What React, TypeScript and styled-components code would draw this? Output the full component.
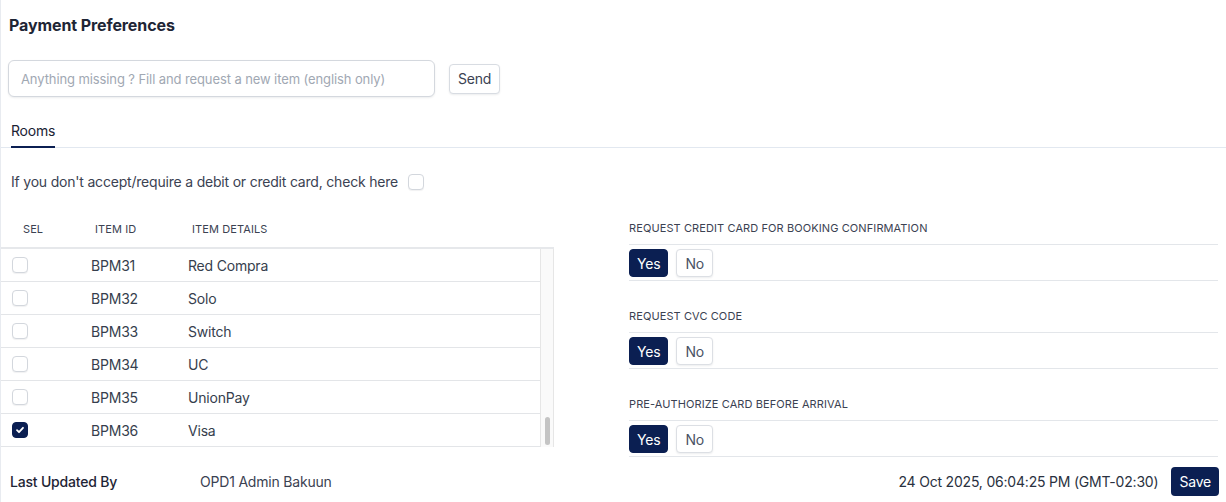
import React, { useState } from 'react';
import styled, { createGlobalStyle, css } from 'styled-components';

const NAVY = '#0b1f52';

const GlobalStyle = createGlobalStyle`
  * { box-sizing: border-box; }
  html, body { margin: 0; padding: 0; background: #fff; }
  body {
    font-family: Inter, "Noto Sans", "Liberation Sans", sans-serif;
    color: #1e293b;
    font-size: 14px;
    letter-spacing: -0.2px;
  }
`;

const Page = styled.div`
  min-height: 502px;
  border-left: 1px solid #e8ebf0;
  padding-top: 14px;
`;

const Title = styled.h1`
  margin: 0 0 24px 8px;
  font-size: 16px;
  line-height: 22px;
  font-weight: 700;
  letter-spacing: -0.1px;
  color: #1e2535;
`;

const RequestRow = styled.div`
  display: flex;
  align-items: center;
  gap: 14px;
  padding-left: 7px;
`;

const RequestInput = styled.input`
  width: 427px;
  height: 37px;
  border: 1px solid #d4d8de;
  border-radius: 6px;
  padding: 0 12px;
  font-family: inherit;
  font-size: 13px;
  letter-spacing: -0.1px;
  color: #1e293b;
  box-shadow: 0 1px 2px rgba(15, 23, 42, 0.08);
  outline: none;
  &::placeholder { color: #a1a8b3; }
`;

const GhostButton = styled.button`
  height: 30px;
  padding: 0 8px;
  border: 1px solid #d8dce2;
  border-radius: 4px;
  background: #fff;
  font-family: inherit;
  font-size: 14px;
  letter-spacing: -0.2px;
  color: #3b4252;
  box-shadow: 0 1px 2px rgba(15, 23, 42, 0.08);
  cursor: pointer;
`;

const TabBar = styled.div`
  display: flex;
  margin-top: 21px;
  border-bottom: 1px solid #e2e8f0;
  padding-left: 10px;
`;

const Tab = styled.div<{ $active?: boolean }>`
  padding: 3px 0 5px;
  font-size: 14px;
  line-height: 20px;
  color: #1a2233;
  margin-bottom: -1px;
  border-bottom: 2px solid ${({ $active }) => ($active ? NAVY : 'transparent')};
`;

const Notice = styled.label`
  display: flex;
  align-items: center;
  gap: 10px;
  margin: 24px 0 0 10px;
  line-height: 20px;
  font-size: 14px;
  color: #3b4252;
`;

const Box = styled.span<{ $checked?: boolean }>`
  display: inline-flex;
  align-items: center;
  justify-content: center;
  width: 16px;
  height: 16px;
  border-radius: 4px;
  flex-shrink: 0;
  ${({ $checked }) =>
    $checked
      ? css`
          background: ${NAVY};
          border: 1px solid ${NAVY};
        `
      : css`
          background: #fff;
          border: 1px solid #d3d7dd;
          box-shadow: 0 1px 1px rgba(15, 23, 42, 0.06);
        `}
`;

const Checkbox: React.FC<{ checked?: boolean }> = ({ checked }) => (
  <Box $checked={checked}>
    {checked && (
      <svg width="10" height="10" viewBox="0 0 10 10" fill="none">
        <path d="M2 5.2l2 2 4-4.4" stroke="#fff" strokeWidth="1.8" strokeLinecap="round" strokeLinejoin="round" />
      </svg>
    )}
  </Box>
);

const Columns = styled.div`
  display: grid;
  grid-template-columns: 553px 1fr;
  column-gap: 75px;
  margin-top: 19px;
  padding-right: 8px;
`;

const Table = styled.div`
  width: 553px;
`;

const GRID = '80px 97px 1fr';

const HeadRow = styled.div`
  display: grid;
  grid-template-columns: ${GRID};
  height: 38px;
  align-items: center;
  border-bottom: 2px solid #e6e8eb;
  padding-right: 14px;
`;

const HeadCell = styled.div<{ $pad: number }>`
  padding-left: ${({ $pad }) => $pad}px;
  font-size: 11px;
  letter-spacing: 0.1px;
  text-transform: uppercase;
  color: #3b4252;
`;

const Body = styled.div`
  display: flex;
  height: 198px;
`;

const Rows = styled.div`
  flex: 1;
  overflow: hidden;
`;

const Rail = styled.div`
  width: 14px;
  display: flex;
  flex-direction: column;
  padding: 0 3px 2px 4px;
  background: #fafafa;
  border-left: 1px solid #e6e6e6;
  border-right: 1px solid #e6e6e6;
`;

const Thumb = styled.div`
  width: 100%;
  margin-top: auto;
  border-radius: 5px;
  background: #c4c4c4;
`;

const Row = styled.div`
  display: grid;
  grid-template-columns: ${GRID};
  height: 33px;
  align-items: center;
  border-bottom: 1px solid #e3e5e8;
`;

const Cell = styled.div<{ $pad: number }>`
  display: flex;
  align-items: center;
  padding-left: ${({ $pad }) => $pad}px;
  font-size: 14px;
  color: #363e4d;
`;

const Settings = styled.div`
  display: flex;
  flex-direction: column;
`;

const Setting = styled.div`
  & + & { margin-top: 18px; }
`;

const SettingLabel = styled.div`
  font-size: 11px;
  line-height: 14px;
  padding-top: 10px;
  margin-bottom: 9px;
  text-transform: uppercase;
  letter-spacing: 0.1px;
  color: #3b4252;
`;

const Toggle = styled.div`
  display: flex;
  gap: 8px;
  padding: 4px 0 3px;
  border-top: 1px solid #e3e6ea;
  border-bottom: 1px solid #e3e6ea;
`;

const ChoiceButton = styled.button<{ $on?: boolean }>`
  height: 28px;
  padding: 0 ${({ $on }) => ($on ? 7 : 8)}px;
  border-radius: 4px;
  font-family: inherit;
  font-size: 14px;
  letter-spacing: -0.2px;
  cursor: pointer;
  ${({ $on }) =>
    $on
      ? css`
          background: ${NAVY};
          color: #fff;
          border: 1px solid ${NAVY};
        `
      : css`
          background: #fff;
          color: #4a5263;
          border: 1px solid #dcdfe4;
          box-shadow: 0 1px 2px rgba(15, 23, 42, 0.08);
        `}
`;

const Footer = styled.div`
  display: flex;
  align-items: center;
  height: 33px;
  margin-top: 8px;
  padding: 0 7px 0 9px;
`;

const FooterLabel = styled.span`
  width: 190px;
  font-weight: 500;
  color: #1e2535;
`;

const FooterValue = styled.span`
  flex: 1;
  color: #3b4252;
`;

const Stamp = styled.span`
  margin-right: 13px;
  color: #2a3140;
`;

const PrimaryButton = styled.button`
  height: 29px;
  padding: 0 8px;
  border: none;
  border-radius: 4px;
  background: ${NAVY};
  color: #fff;
  font-family: inherit;
  font-size: 14px;
  letter-spacing: -0.2px;
  cursor: pointer;
`;

// the full list is long; the view is scrolled to its last six entries
const TOTAL_ROWS = 42;
const items = [
  { id: 'BPM31', name: 'Red Compra' },
  { id: 'BPM32', name: 'Solo' },
  { id: 'BPM33', name: 'Switch' },
  { id: 'BPM34', name: 'UC' },
  { id: 'BPM35', name: 'UnionPay' },
  { id: 'BPM36', name: 'Visa' },
];

const settings = [
  'Request credit card for booking confirmation',
  'Request CVC code',
  'Pre-authorize card before arrival',
];

export default function App() {
  const [selected] = useState<string[]>(['BPM36']);
  const thumbPct = (items.length / TOTAL_ROWS) * 100;

  return (
    <Page>
      <GlobalStyle />
      <Title>Payment Preferences</Title>

      <RequestRow>
        <RequestInput placeholder="Anything missing ? Fill and request a new item (english only)" />
        <GhostButton>Send</GhostButton>
      </RequestRow>

      <TabBar>
        <Tab $active>Rooms</Tab>
      </TabBar>

      <Notice>
        If you don't accept/require a debit or credit card, check here
        <Checkbox />
      </Notice>

      <Columns>
        <Table>
          <HeadRow>
            <HeadCell $pad={22}>Sel</HeadCell>
            <HeadCell $pad={14}>Item ID</HeadCell>
            <HeadCell $pad={14}>Item Details</HeadCell>
          </HeadRow>
          <Body>
            <Rows>
              {items.map((it) => (
                <Row key={it.id}>
                  <Cell $pad={11}>
                    <Checkbox checked={selected.includes(it.id)} />
                  </Cell>
                  <Cell $pad={10}>{it.id}</Cell>
                  <Cell $pad={10}>{it.name}</Cell>
                </Row>
              ))}
            </Rows>
            <Rail>
              <Thumb style={{ height: `${thumbPct}%` }} />
            </Rail>
          </Body>
        </Table>

        <Settings>
          {settings.map((label) => (
            <Setting key={label}>
              <SettingLabel>{label}</SettingLabel>
              <Toggle>
                <ChoiceButton $on>Yes</ChoiceButton>
                <ChoiceButton>No</ChoiceButton>
              </Toggle>
            </Setting>
          ))}
        </Settings>
      </Columns>

      <Footer>
        <FooterLabel>Last Updated By</FooterLabel>
        <FooterValue>OPD1 Admin Bakuun</FooterValue>
        <Stamp>24 Oct 2025, 06:04:25 PM (GMT-02:30)</Stamp>
        <PrimaryButton>Save</PrimaryButton>
      </Footer>
    </Page>
  );
}
